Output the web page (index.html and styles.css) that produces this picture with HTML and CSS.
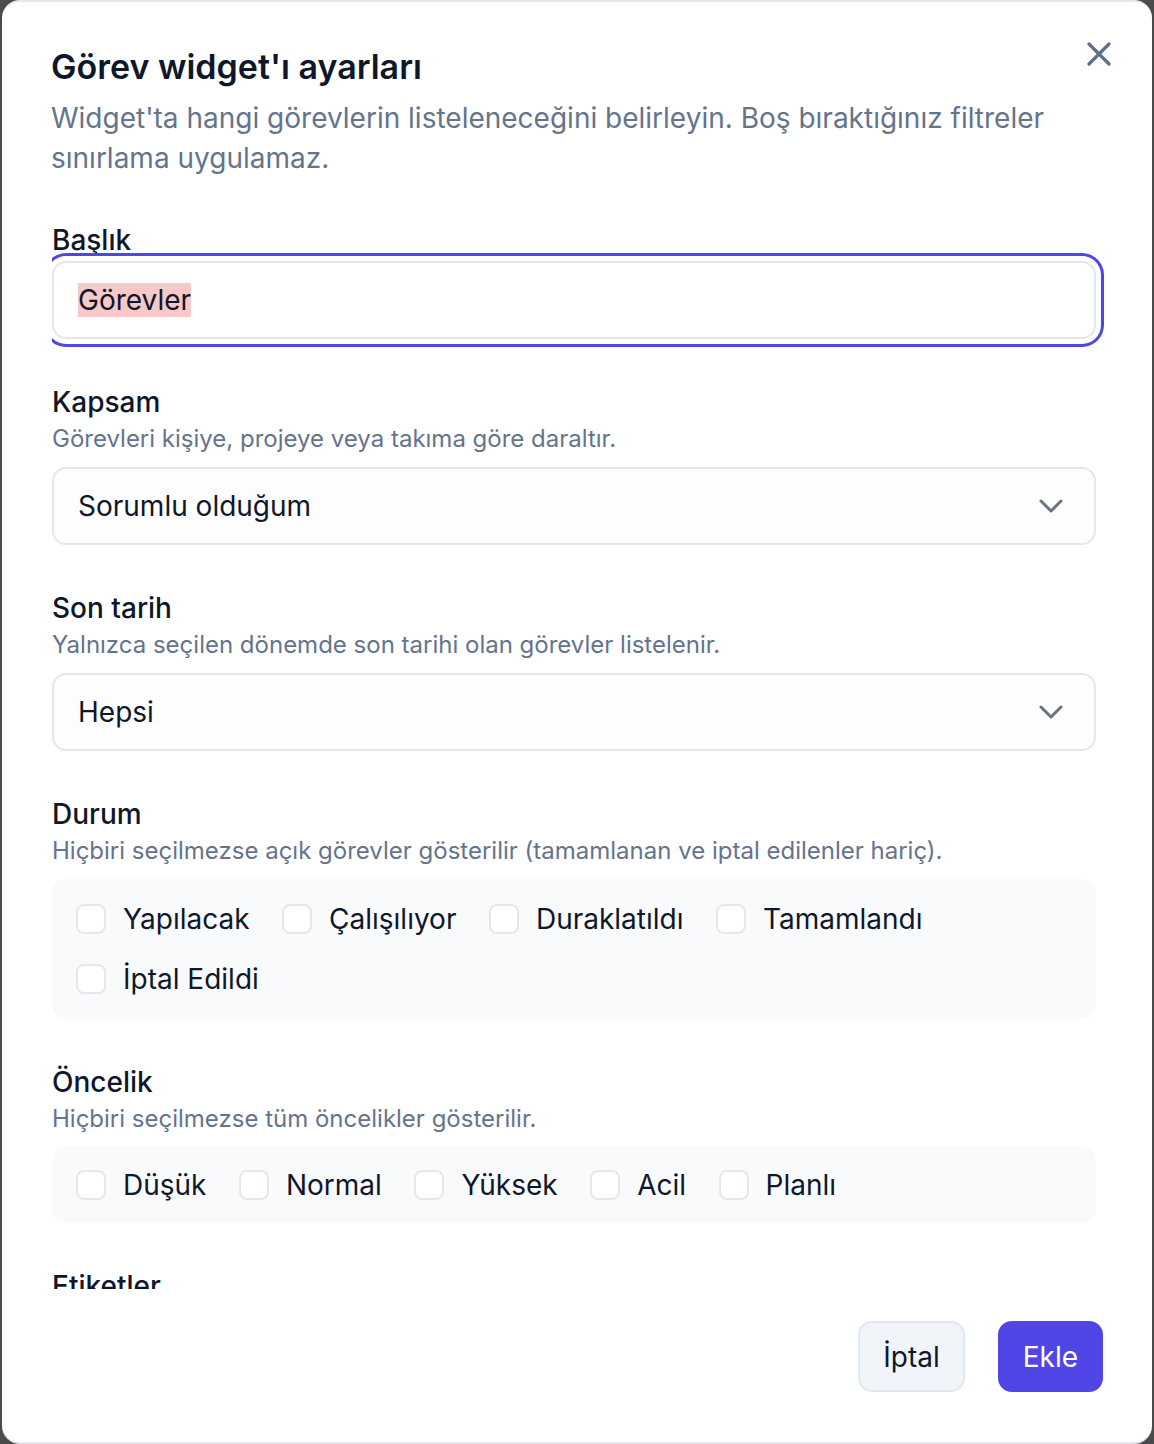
FILE: index.html
```html
<!DOCTYPE html>
<html lang="tr">
<head>
<meta charset="utf-8">
<title>Görev widget'ı ayarları</title>
<link rel="stylesheet" href="styles.css">
</head>
<body>
<div class="modal">
  <button class="close" aria-label="Kapat">
    <svg width="24" height="24" viewBox="0 0 24 24"><path d="M2 2L22 22M22 2L2 22" fill="none" stroke="#5f6f86" stroke-width="3.2" stroke-linecap="round"/></svg>
  </button>
  <header class="head">
    <h1 class="title">Görev widget'ı ayarları</h1>
    <p class="lead">Widget'ta hangi görevlerin listeleneceğini belirleyin. Boş bıraktığınız filtreler sınırlama uygulamaz.</p>
  </header>
  <div class="body">
    <div class="field">
      <div class="label">Başlık</div>
      <div class="input focused"><span class="sel">Görevler</span></div>
    </div>
    <div class="field">
      <div class="label">Kapsam</div>
      <div class="hint">Görevleri kişiye, projeye veya takıma göre daraltır.</div>
      <div class="input select"><span>Sorumlu olduğum</span>
        <svg class="chev" width="24" height="14" viewBox="0 0 24 14"><path d="M2 2L12 12L22 2" fill="none" stroke="#6b7280" stroke-width="3" stroke-linecap="round" stroke-linejoin="round"/></svg>
      </div>
    </div>
    <div class="field">
      <div class="label">Son tarih</div>
      <div class="hint">Yalnızca seçilen dönemde son tarihi olan görevler listelenir.</div>
      <div class="input select"><span>Hepsi</span>
        <svg class="chev" width="24" height="14" viewBox="0 0 24 14"><path d="M2 2L12 12L22 2" fill="none" stroke="#6b7280" stroke-width="3" stroke-linecap="round" stroke-linejoin="round"/></svg>
      </div>
    </div>
    <div class="field">
      <div class="label">Durum</div>
      <div class="hint">Hiçbiri seçilmezse açık görevler gösterilir (tamamlanan ve iptal edilenler hariç).</div>
      <div class="group">
        <label class="opt"><span class="box"></span>Yapılacak</label>
        <label class="opt"><span class="box"></span>Çalışılıyor</label>
        <label class="opt"><span class="box"></span>Duraklatıldı</label>
        <label class="opt"><span class="box"></span>Tamamlandı</label>
        <label class="opt"><span class="box"></span>İptal Edildi</label>
      </div>
    </div>
    <div class="field">
      <div class="label">Öncelik</div>
      <div class="hint">Hiçbiri seçilmezse tüm öncelikler gösterilir.</div>
      <div class="group single">
        <label class="opt"><span class="box"></span>Düşük</label>
        <label class="opt"><span class="box"></span>Normal</label>
        <label class="opt"><span class="box"></span>Yüksek</label>
        <label class="opt"><span class="box"></span>Acil</label>
        <label class="opt"><span class="box"></span>Planlı</label>
      </div>
    </div>
    <div class="field">
      <div class="label">Etiketler</div>
    </div>
  </div>
  <footer class="foot">
    <button class="btn ghost">İptal</button>
    <button class="btn primary">Ekle</button>
  </footer>
</div>
</body>
</html>
```

FILE: styles.css
```css
* { box-sizing: border-box; }
html, body {
  margin: 0;
  padding: 0;
  height: 1444px;
  background: #4b4b4e;
  font-family: Inter, "Noto Sans", "Liberation Sans", sans-serif;
  color: #0f172a;
  overflow: hidden;
}
.modal {
  position: relative;
  margin: 0 2px;
  height: 1444px;
  background: #fff;
  border-top: 2px solid #e6e7ec;
  border-bottom: 2px solid #e6e7ec;
  border-radius: 18px;
  display: flex;
  flex-direction: column;
  overflow: hidden;
}
.close {
  position: absolute;
  top: 40px;
  left: 1085px;
  width: 24px;
  height: 24px;
  padding: 0;
  border: 0;
  background: none;
  display: block;
}
.close svg { display: block; }
.head {
  padding: 44px 50px 0 49px;
}
.title {
  margin: 0 0 10px 0;
  font-size: 34px;
  line-height: 42px;
  font-weight: 600;
  color: #0f172a;
}
.lead {
  margin: 0;
  font-size: 28px;
  line-height: 40px;
  color: #64748b;
  max-width: 1010px;
}
.body {
  flex: 1;
  min-height: 0;
  overflow: hidden;
  margin-left: 50px;
  padding: 45px 56px 0 0;
}
.field {
  display: flex;
  flex-direction: column;
  margin-bottom: 46px;
}
.label {
  font-size: 28px;
  line-height: 34px;
  font-weight: 500;
  color: #0f172a;
  margin-bottom: 4px;
}
.hint {
  font-size: 24px;
  line-height: 32px;
  color: #64748b;
  margin-bottom: 12px;
}
.input {
  height: 78px;
  border: 2px solid #e5e7eb;
  border-radius: 14px;
  padding: 0 24px;
  display: flex;
  align-items: center;
  font-size: 28px;
  line-height: 34px;
  color: #0f172a;
  background: #fff;
}
.input.focused {
  box-shadow: 0 0 0 5px #fff, 0 0 0 8px #4f46e5;
}
.sel {
  background: #f6c8c8;
}
.select {
  justify-content: space-between;
  background: #fdfdfe;
  padding-right: 31px;
}
.chev { display: block; }
.group {
  background: #f8fafc;
  border-radius: 14px;
  padding: 23px 24px;
  display: flex;
  flex-wrap: wrap;
  column-gap: 32.5px;
  row-gap: 26px;
}
.group.single {
  padding-top: 21px;
  padding-bottom: 21px;
}
.opt {
  display: flex;
  align-items: center;
  gap: 17px;
  height: 34px;
  font-size: 28px;
  line-height: 34px;
  color: #0f172a;
}
.box {
  width: 30px;
  height: 30px;
  border: 2px solid #e5e7eb;
  border-radius: 8px;
  background: #fff;
  flex: none;
}
.foot {
  display: flex;
  justify-content: flex-end;
  gap: 33px;
  padding: 32px 49px 50px 50px;
}
.btn {
  font-family: inherit;
  font-size: 28px;
  line-height: 34px;
  height: 71px;
  padding: 0 23px;
  border-radius: 14px;
  border: 2px solid transparent;
  font-weight: 400;
}
.ghost {
  background: #f1f5f9;
  border-color: #e2e8f0;
  color: #0f172a;
}
.primary {
  background: #4f46e5;
  border-color: #4f46e5;
  color: #fff;
}
```
